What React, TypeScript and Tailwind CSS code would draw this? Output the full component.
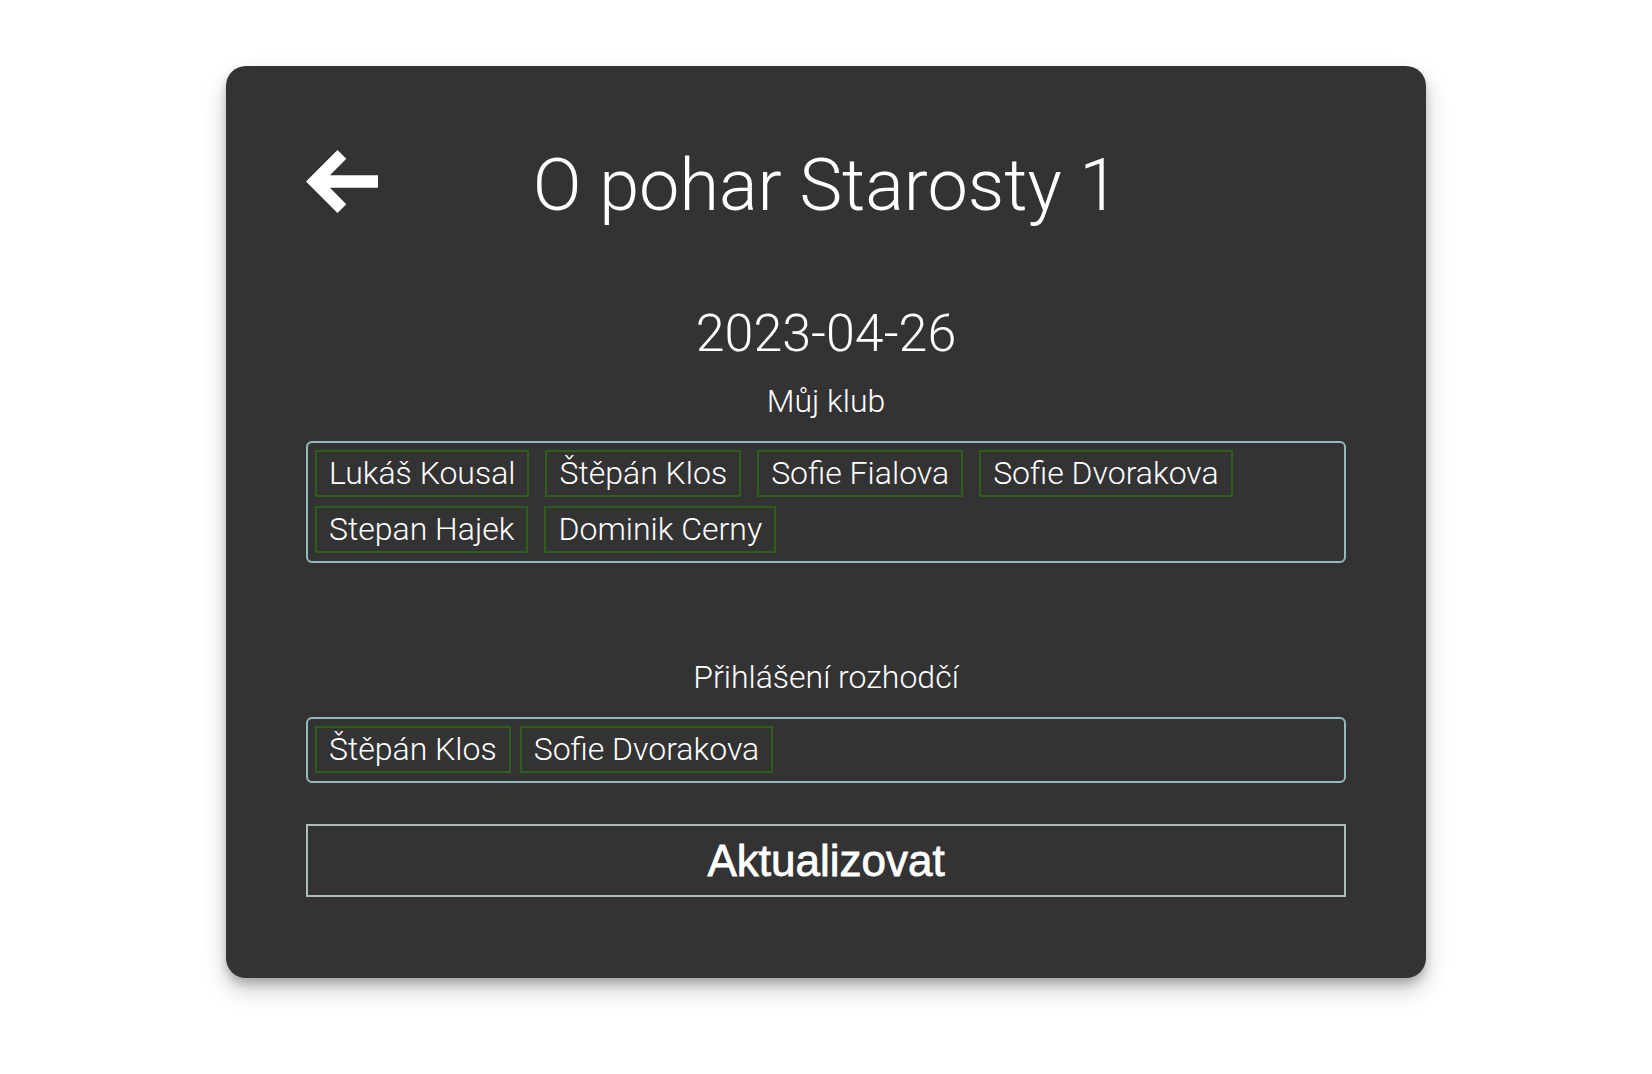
import React from "react";

const roboto = { fontFamily: "Roboto, 'Noto Sans', sans-serif" };

function Tag({ name }: { name: string }) {
  return (
    <div className="border-2 border-[#2e5d1c] px-[12px] pt-[2px] pb-[3px] text-[32px] leading-[38px] font-light text-white whitespace-nowrap">
      {name}
    </div>
  );
}

function BackArrow() {
  return (
    <svg width="72" height="63" viewBox="0 0 72 63" className="block">
      <polygon
        fill="#ffffff"
        points="0,31.5 31.5,0 40.3,8.8 23.9,25.25 72,25.25 72,37.75 23.9,37.75 40.3,54.2 31.5,63"
      />
    </svg>
  );
}

export default function App() {
  const club = ["Lukáš Kousal", "Štěpán Klos", "Sofie Fialova", "Sofie Dvorakova", "Stepan Hajek", "Dominik Cerny"];
  const referees = ["Štěpán Klos", "Sofie Dvorakova"];
  return (
    <div className="min-h-[1074px] w-full bg-white flex justify-center items-start pt-[66px]" style={roboto}>
      <div className="w-[1200px] bg-[#333333] rounded-[20px] shadow-[0_12px_24px_rgba(0,0,0,0.2),0_6px_8px_rgba(0,0,0,0.2)] px-[80px] pt-[84px] pb-[81px] flex flex-col text-white">
        <div className="grid grid-cols-[72px_1fr_72px] items-start h-[72px]">
          <div>
            <BackArrow />
          </div>
          <div className="text-center text-[72px] leading-[72px] font-light whitespace-nowrap">O pohar Starosty 1</div>
          <div />
        </div>
        <div className="mt-[85px] text-center text-[52px] leading-[53px] font-light">2023-04-26</div>
        <div className="mt-[26px] text-center text-[32px] leading-[31px] font-light">Můj klub</div>
        <div className="mt-[24px] border-2 border-[#8fbcbb] rounded-[6px] px-[7px] pt-[7px] pb-[8px] flex flex-wrap gap-x-[16px] gap-y-[9px]">
          {club.map((n) => (
            <Tag key={n} name={n} />
          ))}
        </div>
        <div className="mt-[99px] text-center text-[32px] leading-[31px] font-light">Přihlášení rozhodčí</div>
        <div className="mt-[24px] border-2 border-[#8fbcbb] rounded-[6px] px-[7px] pt-[7px] pb-[8px] flex flex-wrap gap-x-[9px] gap-y-[9px]">
          {referees.map((n) => (
            <Tag key={n} name={n} />
          ))}
        </div>
        <button
          className="mt-[41px] h-[73px] border-2 border-[#a9bcba] bg-[#333333] text-white text-[44px] leading-[69px] text-center [-webkit-text-stroke:0.8px_white]"
          style={{ fontFamily: "'Liberation Sans', Arial, sans-serif" }}
        >
          Aktualizovat
        </button>
      </div>
    </div>
  );
}
